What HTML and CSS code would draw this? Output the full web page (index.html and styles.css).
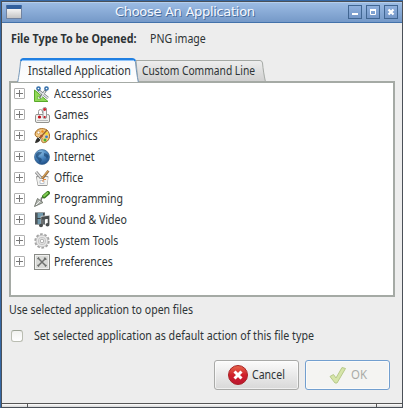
FILE: index.html
```html
<!DOCTYPE html>
<html lang="en">
<head>
<meta charset="utf-8">
<title>Choose An Application</title>
<link rel="stylesheet" href="styles.css">
</head>
<body>
<div class="window">
  <header class="titlebar">
    <span class="app-icon"></span>
    <h1>Choose An Application</h1>
    <div class="controls">
      <span class="control"><svg width="12" height="12"><path d="M3 7h6v2H3z" fill="#fff"/></svg></span>
      <span class="control"><svg width="12" height="12"><path d="M3.500 4v4.500h5V4" fill="none" stroke="#fff"/><path d="M3 3h6v2H3z" fill="#fff"/></svg></span>
      <span class="control"><svg width="12" height="12"><path d="M3.500 3.500l5 5M8.500 3.500l-5 5" stroke="#fff" stroke-width="2.200"/></svg></span>
    </div>
  </header>
  <main>
    <div class="filetype"><b>File Type To be Opened:</b><span>PNG image</span></div>
    <div class="tabs">
      <div class="tab active">
        <svg width="122" height="24"><defs><linearGradient id="ta" x2="0" y2="1"><stop stop-color="#f5f7fa"/><stop offset="1" stop-color="#fff"/></linearGradient></defs><path d="M.5 25C2 18 3 10 3.500 4Q4 1 6 1H115Q118 1 118.500 4C119 10 120 18 121.500 25" fill="url(#ta)" stroke="#7597b8"/><path d="M4 3Q4.500 1 6.500 1H115Q117.500 1 118 3" fill="none" stroke="#2180e2" stroke-width="2"/><path d="M5 2.500H117" stroke="#8fc4fb"/></svg>
        <span>Installed Application</span>
      </div>
      <div class="tab idle">
        <svg width="130" height="21"><defs><linearGradient id="tb" x2="0" y2="1"><stop stop-color="#eeeeee"/><stop offset="1" stop-color="#cfcfcf"/></linearGradient></defs><path d="M0 .5H124Q126 .5 126.500 3C127 9 128 15 129.500 22H2Z" fill="url(#tb)" stroke="#a5a9a5"/></svg>
        <span>Custom Command Line</span>
      </div>
    </div>
    <ul class="list">
      <li><i class="expander"></i><svg viewBox="0 0 16 16"><path d="M.5 4v11.500H14Z" fill="#91d957" stroke="#58a928"/><path d="M3.500 10v3H7Z" fill="#fff" stroke="#65b332" stroke-width=".7"/><path d="M4 4l10 8M12 4L6 12" stroke="#777d80" stroke-width="2.600"/><path d="M5 5l9 7M11 5L7 12" stroke="#e4e7e8" stroke-width="1.300"/><circle cx="4.500" cy="2.500" r="1.600" fill="#fff" stroke="#336fab" stroke-width="1.500"/><circle cx="12.500" cy="2.500" r="1.600" fill="#fff" stroke="#336fab" stroke-width="1.500"/></svg><span>Accessories</span></li>
      <li><i class="expander"></i><svg viewBox="0 0 16 16"><path d="M1.500 8.500Q1.500 7.500 3 7.500H13.500Q15.500 7.500 15.500 9V14Q15.500 15.500 14 15.500H3Q1.500 15.500 1.500 14Z" fill="#f1f1ee" stroke="#92928f"/><path d="M4.500 8V4.500Q4.500 2.500 6.500 2.500Q8.500 2.500 8.500 5V6" fill="none" stroke="#999" stroke-width="1"/><rect x="9" y=".5" width="3.500" height="11" rx="1.500" fill="#f5f5f5" stroke="#999"/><circle cx="10.700" cy="2.500" r="1.400" fill="#d8222b"/><circle cx="5.500" cy="10" r="1.600" fill="#c40d18"/><circle cx="10.700" cy="10" r="1.100" fill="#c40d18"/><path d="M3 13.500H14" stroke="#bbb"/></svg><span>Games</span></li>
      <li><i class="expander"></i><svg viewBox="0 0 16 16"><path d="M1 6C2 0 9-.5 13 2C17 6 16 12 12 14C8 16 7 13 8 11C8 8 6 10 3 9Q1 8 1 6Z" fill="#f4ca83" stroke="#a66b23"/><circle cx="4.500" cy="4.500" r="1.500" fill="#fff" stroke="#bd8338" stroke-width=".7"/><circle cx="8.500" cy="3.500" r="1.200" fill="#ef8b17"/><circle cx="12.500" cy="5.500" r="1.300" fill="#f3df22"/><circle cx="12.500" cy="8.800" r="1.400" fill="#387fc4"/><circle cx="11" cy="12" r="1.500" fill="#46b52a"/><circle cx="7.500" cy="8" r="1.300" fill="#d5291f"/><path d="M13 2L5 11" stroke="#9a632d" stroke-width="1.400"/><path d="M1 15Q2 10 5 9L7 11Q5 15 1 15Z" fill="#30302d"/><path d="M4 9l3 3" stroke="#c7c7bd"/></svg><span>Graphics</span></li>
      <li><i class="expander"></i><svg viewBox="0 0 16 16"><defs><radialGradient id="gl" cx=".4" cy=".2" r=".8"><stop stop-color="#86b9e0"/><stop offset=".5" stop-color="#4a86bf"/><stop offset="1" stop-color="#1f4f88"/></radialGradient></defs><circle cx="8" cy="8" r="7.500" fill="url(#gl)" stroke="#386490" stroke-width=".7"/><path d="M2 5L4 3L8 3L7 5L5 6L4 8L7 9L8 11L6 14L4.500 11L2 8ZM10 4L13 5L14.500 7L13 10L12 8L10 7Z" fill="#173f6b" opacity=".6"/></svg><span>Internet</span></li>
      <li><i class="expander"></i><svg viewBox="0 0 16 16"><path d="M2.500 6.500H14L13 15.500H4Z" fill="#f2f2f0" stroke="#999"/><path d="M2 2L8 9" stroke="#898989" stroke-width="3"/><path d="M2 2L8 9" stroke="#dedede" stroke-width="1.300"/><path d="M14.500.800L8 9" stroke="#94704b" stroke-width="2.600"/><path d="M14 1L8 8" stroke="#e6aa53" stroke-width="1.100"/><path d="M3 7L5 9H12L14 7L13 15H4Z" fill="#f3f3f0"/><path d="M6 10.500h4v3H6z" fill="#fff" stroke="#bbc3cf"/><path d="M9 9.500h3M8 11h2" stroke="#ec8b42" stroke-width="1.200"/></svg><span>Office</span></li>
      <li><i class="expander"></i><svg viewBox="0 0 16 16"><path d="M.5 15.500L3.500 7.500L9 11.500Z" fill="#b4b8b2" stroke="#787d75"/><path d="M2 14L6.500 9.500" stroke="#eee"/><path d="M7 10L7.500 7L10 6" fill="none" stroke="#777" stroke-width="1.500"/><path d="M10 5.500L14 2" stroke="#397b20" stroke-width="4" stroke-linecap="round"/><path d="M10 5L13.500 2" stroke="#83cf55" stroke-width="1.800" stroke-linecap="round"/></svg><span>Programming</span></li>
      <li><i class="expander"></i><svg viewBox="0 0 16 16"><path d="M1 .5H11V12.500H1Z" fill="#3b4245"/><path d="M3.500 1H9V6H3.500ZM3.500 7H9V12H3.500Z" fill="#7299ac"/><path d="M2 1.500V12M10.300 1.500V12" stroke="#b9bebf" stroke-width=".8" stroke-dasharray="1 1"/><path d="M8 13V5L15 4V12" fill="none" stroke="#ddd" stroke-width="2.400"/><path d="M8 13V5.500L14.500 4.500V12M8 7L14.500 6" fill="none" stroke="#484c4d" stroke-width="1.500"/><ellipse cx="7" cy="13.500" rx="2" ry="1.700" fill="#484c4d"/><ellipse cx="13.500" cy="12.800" rx="2" ry="1.700" fill="#484c4d"/></svg><span>Sound &amp; Video</span></li>
      <li><i class="expander"></i><svg viewBox="0 0 16 16"><circle cx="8" cy="8" r="6.700" fill="none" stroke="#a4a4a4" stroke-width="2" stroke-dasharray="2.600 1.610"/><circle cx="8" cy="8" r="5.900" fill="#e8e8e8" stroke="#b0b0b0" stroke-width=".7"/><circle cx="8" cy="8" r="3.700" fill="none" stroke="#bdbdbd" stroke-width=".8"/><circle cx="8" cy="8" r="1.800" fill="#fff" stroke="#999" stroke-width=".8"/></svg><span>System Tools</span></li>
      <li><i class="expander"></i><svg viewBox="0 0 16 16"><rect x=".5" y=".5" width="15" height="15" fill="#d9dad7" stroke="#888a85"/><rect x="1.500" y="1.500" width="13" height="13" fill="none" stroke="#f0f0ef"/><path d="M4 4l8 8M12 4l-8 8" stroke="#6d6f6d" stroke-width="1.500"/><path d="M3.500 5L5 3.500M10.500 3.500V5.500H12.500M3.500 11L5 12.500M11 12.500L12.500 11" fill="none" stroke="#6d6f6d" stroke-width="1.200"/></svg><span>Preferences</span></li>
    </ul>
    <p class="hint"><span>Use selected application to open files</span></p>
    <label class="default"><i class="checkbox"></i><span>Set selected application as default action of this file type</span></label>
    <div class="actions">
      <button class="cancel"><svg width="20" height="20"><defs><linearGradient id="rd" x2="0" y2="1"><stop stop-color="#e7684c"/><stop offset=".5" stop-color="#cf202b"/><stop offset="1" stop-color="#bb1630"/></linearGradient></defs><circle cx="10" cy="10" r="9.500" fill="url(#rd)" stroke="#a82326"/><path d="M6.500 6.500l7 7M13.500 6.500l-7 7" stroke="#fff" stroke-width="3"/></svg><span>Cancel</span></button>
      <button class="ok" disabled><svg width="18" height="18"><path d="M1 10.500L4.500 8.500L7 12L13 1.500L16.500 2.500L8 17H6Z" fill="#d6e5a9" stroke="#b7c98b" stroke-linejoin="round"/></svg><span>OK</span></button>
    </div>
  </main>
  <footer class="grip"><i></i><i></i><i></i></footer>
</div>
</body>
</html>
```

FILE: styles.css
```css
* { box-sizing: border-box; }
body { margin: 0; width: 403px; height: 408px; overflow: hidden; background: #3568a5; color: #2e3436; font: 12px/16px "Noto Sans", sans-serif; }
.window { height: 407px; margin: 1px 0 0 1px; border: 1px solid #4a5058; background: #ededed; display: flex; flex-direction: column; }
.titlebar { height: 21px; flex: none; display: flex; align-items: center; padding: 0 4px 1px; border-top: 1px solid #b5cfed; border-bottom: 1px solid #4372aa; background: linear-gradient(#9bbbe3, #7599c8); }
.app-icon { width: 16px; height: 14px; border: 1px solid #7183a0; border-top: 4px solid #31609e; border-radius: 1px; background: linear-gradient(#f5f5f5, #c5c5c5); }
h1 { flex: 1; margin: -1px 0 0 93px; font: 13px/18px "DejaVu Sans", sans-serif; letter-spacing: -.3px; color: #f4f8ff; text-shadow: 1px 1px 0 #496d9b; white-space: nowrap; }
.controls { display: flex; gap: 4px; }
.control { width: 14px; height: 14px; border: 1px solid #416692; background: linear-gradient(#8fb0dd, #7396c7); }
.control svg { display: block; }
main { flex: 1; display: flex; flex-direction: column; padding: 0 7px; }
main span, .filetype b { display: inline-block; transform: scaleX(.88); transform-origin: left; white-space: nowrap; }
.filetype { height: 35px; padding: 8px 0 0 2px; display: flex; gap: 12px; white-space: nowrap; }
.filetype b { width: 127px; transform: scaleX(.895); }
.tabs { height: 23px; display: flex; align-items: flex-end; padding-left: 8px; }
.tab { position: relative; display: flex; white-space: nowrap; }
.tab svg { position: absolute; inset: 0; }
.tab span { position: relative; }
.active { width: 122px; height: 24px; z-index: 1; padding: 5px 0 0 11px; margin-bottom: -1px; }
.active span { transform: scaleX(.895); }
.idle { width: 130px; height: 21px; margin-left: -3px; padding: 3px 0 0 6px; }
.idle span { transform: scaleX(.855); }
.list { height: 216px; margin: 0; padding: 0; border: 2px solid #a5aaa5; background: #fff; list-style: none; flex: none; }
.list li { height: 21px; display: flex; align-items: center; padding-left: 3px; white-space: nowrap; }
.list svg { width: 16px; height: 16px; margin: 0 4px 0 9px; }
.expander { width: 11px; height: 11px; border: 1px solid #b0b0b0; border-radius: 1px; background: linear-gradient(#777, #777) center / 7px 1px no-repeat, linear-gradient(#777, #777) center / 1px 7px no-repeat, #fff; }
.hint { margin: 5px 0 0; height: 16px; }
.default { margin-top: 10px; height: 16px; display: flex; align-items: center; padding-left: 2px; }
.default span { transform: scaleX(.888); }
.checkbox { width: 12px; height: 12px; border: 1px solid #babdb2; border-top-color: #9da396; border-radius: 3px; margin-right: 11px; background: linear-gradient(#f2f2f0, #fff); }
.actions { margin-top: 16px; padding-right: 5px; display: flex; justify-content: flex-end; gap: 6px; }
button { width: 85px; height: 30px; border: 1px solid #a9aaa8; border-radius: 3px; display: flex; align-items: center; padding: 0; font: inherit; color: #2e3436; background: linear-gradient(#fbfbfb, #d8d8d8); box-shadow: inset 0 0 0 1px rgba(255,255,255,.6); }
.cancel { padding-left: 13px; gap: 4px; }
.ok { padding-left: 23px; gap: 4px; border-color: #729fcf; background: #f4f4f2; color: #a9aba7; }
.ok span { transform: scaleX(.95); }
.grip { height: 4px; flex: none; display: grid; grid-template-columns: 25px 1fr 26px; border-top: 1px solid #555; background: linear-gradient(#fff, #d5d5d5); }
.grip i + i { border-left: 1px solid #555; }
```
